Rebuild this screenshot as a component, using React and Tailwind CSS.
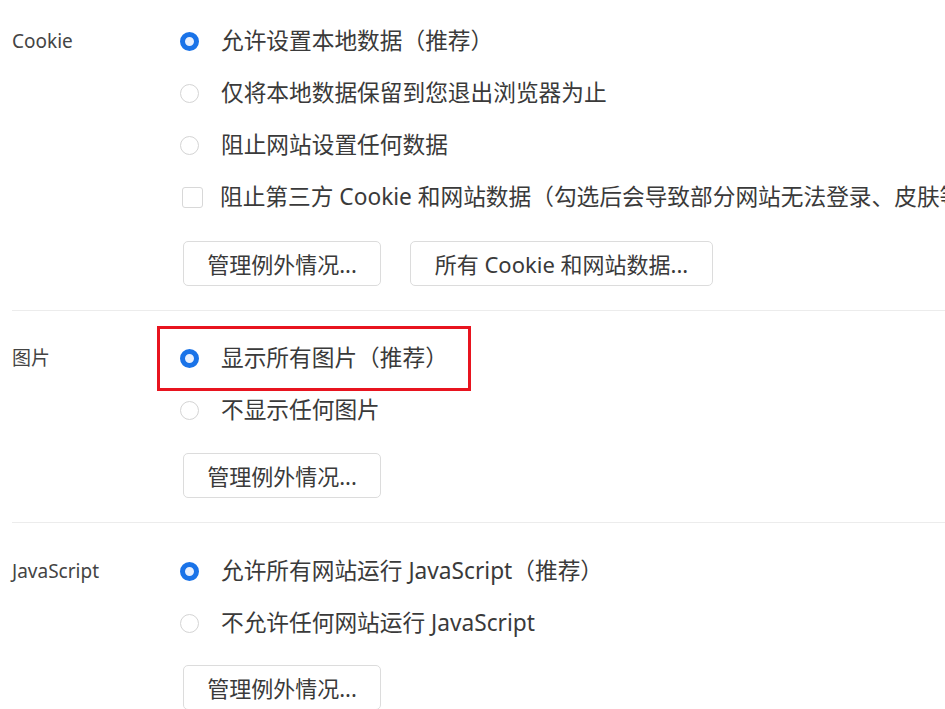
import React from "react";

const font = {
  fontFamily: '"Noto Sans", "Noto Sans CJK SC", sans-serif',
};

function Radio({ checked }) {
  return checked ? (
    <span className="box-border inline-block h-[19px] w-[19px] shrink-0 rounded-full border-[5px] border-[#1a73e8] bg-[#e8f0fe]" />
  ) : (
    <span className="box-border inline-block h-[19px] w-[19px] shrink-0 rounded-full border border-[#d4d4d4] bg-white" />
  );
}

function RadioRow({ checked, children }) {
  return (
    <div className="flex h-[52px] items-center">
      <Radio checked={checked} />
      <span className="ml-[22px] text-[22.7px] leading-none text-[#3a3a3a]">{children}</span>
    </div>
  );
}

function CheckRow({ children }) {
  return (
    <div className="flex h-[52px] items-center">
      <span className="ml-[2px] box-border inline-block h-[21px] w-[21px] shrink-0 rounded-[3px] border border-[#d8d8d8] bg-white" />
      <span className="ml-[17px] text-[22.7px] leading-none text-[#3a3a3a]">{children}</span>
    </div>
  );
}

function Btn({ w, children }) {
  return (
    <button
      className={`box-border flex h-[45px] items-center justify-center rounded-[5px] border border-[#dcdcdc] bg-white text-[22px] leading-none text-[#3a3a3a] ${w}`}
    >
      {children}
    </button>
  );
}

function Section({ label, pt, children, last }) {
  return (
    <div
      className={`ml-3 flex ${pt} ${last ? "" : "border-b border-[#ececec] pb-6"}`}
    >
      <div className="flex h-[52px] w-[168px] shrink-0 items-center text-[19px] leading-none text-[#444]">
        {label}
      </div>
      <div className="flex flex-col">{children}</div>
    </div>
  );
}

export default function App() {
  return (
    <div
      className="h-[709px] w-[945px] overflow-hidden whitespace-nowrap bg-white"
      style={font}
    >
      <Section label="Cookie" pt="pt-[15px]">
        <RadioRow checked>允许设置本地数据（推荐）</RadioRow>
        <RadioRow>仅将本地数据保留到您退出浏览器为止</RadioRow>
        <RadioRow>阻止网站设置任何数据</RadioRow>
        <CheckRow>
          阻止第三方 Cookie 和网站数据（勾选后会导致部分网站无法登录、皮肤等设置无法保存）
        </CheckRow>
        <div className="ml-[3px] mt-[18px] flex gap-[29px]">
          <Btn w="w-[198px]">管理例外情况...</Btn>
          <Btn w="w-[303px]">所有 Cookie 和网站数据...</Btn>
        </div>
      </Section>

      <Section label="图片" pt="pt-[21px]">
        <div className="relative">
          <RadioRow checked>显示所有图片（推荐）</RadioRow>
          <div className="pointer-events-none absolute left-[-23px] top-[-6px] h-[65px] w-[314px] border-[3px] border-[#e8141f]" />
        </div>
        <RadioRow>不显示任何图片</RadioRow>
        <div className="ml-[3px] mt-[17px] flex">
          <Btn w="w-[198px]">管理例外情况...</Btn>
        </div>
      </Section>

      <Section label="JavaScript" pt="pt-[22px]" last>
        <RadioRow checked>允许所有网站运行 JavaScript（推荐）</RadioRow>
        <RadioRow>不允许任何网站运行 JavaScript</RadioRow>
        <div className="ml-[3px] mt-[16px] flex">
          <Btn w="w-[198px]">管理例外情况...</Btn>
        </div>
      </Section>
    </div>
  );
}
